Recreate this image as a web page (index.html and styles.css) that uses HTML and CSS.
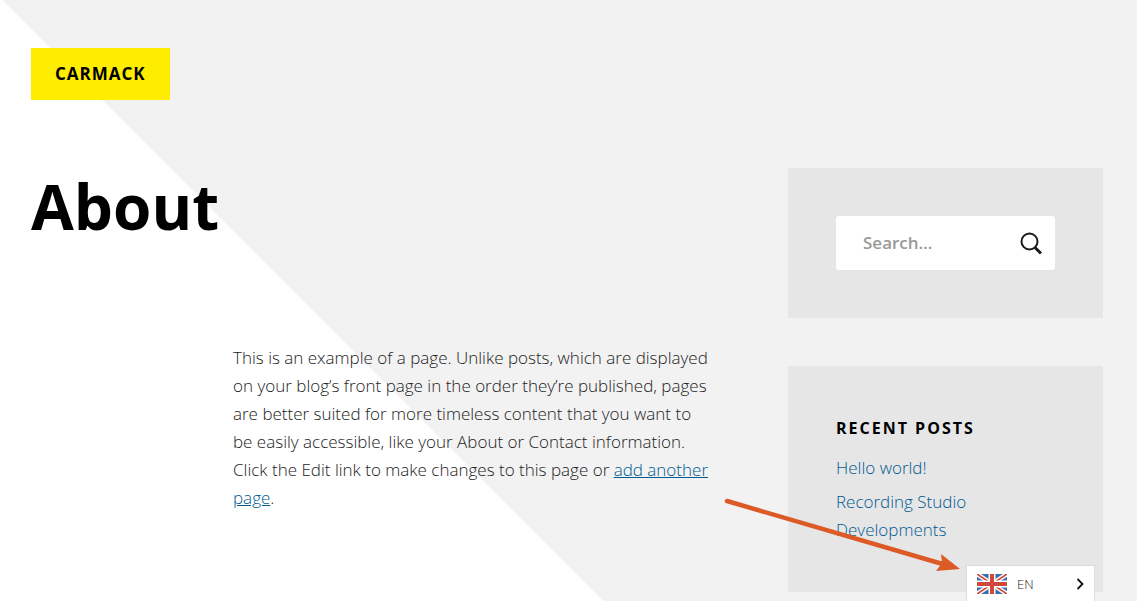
FILE: index.html
```html
<!DOCTYPE html>
<html lang="en">
<head>
<meta charset="utf-8">
<meta name="viewport" content="width=device-width, initial-scale=1">
<title>About – Carmack</title>
<link rel="stylesheet" href="styles.css">
</head>
<body>
<div class="page">
  <header class="site-header">
    <a class="site-title" href="#">CARMACK</a>
  </header>
  <div class="columns">
    <main class="content">
      <h1 class="entry-title">About</h1>
      <p class="entry-text">This is an example of a page. Unlike posts, which are displayed<br>
        on your blog’s front page in the order they’re published, pages<br>
        are better suited for more timeless content that you want to<br>
        be easily accessible, like your About or Contact information.<br>
        Click the Edit link to make changes to this page or <a href="#">add another<br>
        page</a>.</p>
    </main>
    <aside class="sidebar">
      <section class="widget">
        <form class="search" role="search">
          <input class="search-field" type="search" placeholder="Search…" aria-label="Search">
          <button class="search-button" type="button" aria-label="Search">
            <svg width="24" height="24" viewBox="0 0 24 24" fill="none" stroke="#1a1a1a"><circle cx="10.5" cy="10.5" r="8" stroke-width="2"/><path d="M16 16.5L22 22.5" stroke-width="3"/></svg>
          </button>
        </form>
      </section>
      <section class="widget">
        <h2 class="widget-title">RECENT POSTS</h2>
        <ul class="post-list">
          <li><a href="#">Hello world!</a></li>
          <li><a href="#">Recording Studio Developments</a></li>
        </ul>
      </section>
    </aside>
  </div>
</div>
<svg class="pointer" width="236" height="78" viewBox="0 0 236 78" aria-hidden="true">
  <path d="M3 6L222 70" stroke="#dc5a26" stroke-width="4.5" stroke-linecap="round"/>
  <path d="M236 74L217 59L218 68L212 76Z" fill="#dc5a26"/>
</svg>
<button class="language" type="button">
  <svg class="flag" width="30" height="20" viewBox="0 0 30 20" aria-hidden="true">
    <path fill="#3c6eaa" d="M0 0h30v20H0z"/>
    <path d="M0 0L30 20M30 0L0 20" stroke="#fff" stroke-width="4.5"/>
    <path d="M0 0L15 10M30 20L15 10M30 0L15 10M0 20L15 10" stroke="#d0483b" stroke-width="1.6"/>
    <path d="M15 0v20M0 10h30" stroke="#fff" stroke-width="7"/>
    <path d="M15 0v20M0 10h30" stroke="#d0483b" stroke-width="4"/>
  </svg>
  <span class="language-code">EN</span>
  <svg width="8" height="12" viewBox="0 0 8 12" fill="none" stroke="#111" stroke-width="1.8" aria-hidden="true"><path d="M1.5 1L6.5 6L1.5 11"/></svg>
</button>
</body>
</html>
```

FILE: styles.css
```css
* {
  box-sizing: border-box;
}

body {
  margin: 0;
  background: #f2f2f2 linear-gradient(to top right, #fff calc(50% + 1px), #f2f2f2 calc(50% + 2px)) 0 0 / 2000px 2000px no-repeat;
  color: #222;
  font-family: "Open Sans", "Noto Sans", sans-serif;
  font-size: 17px;
  font-weight: 300;
  line-height: 28px;
}

a {
  color: #005a92;
}

.page {
  padding: 48px 34px 8px 31px;
}

.site-header {
  display: flex;
  margin-bottom: 68px;
}

.site-title {
  padding: 12px 24px;
  background: #ffed00;
  color: #000;
  font-weight: 700;
  letter-spacing: 1px;
  text-decoration: none;
}

.columns {
  display: grid;
  grid-template-columns: minmax(0, 1fr) 315px;
  gap: 40px;
}

.entry-title {
  margin: 0 0 100px;
  color: #000;
  font-size: 62px;
  font-weight: 700;
  line-height: 76px;
}

.entry-text {
  margin: 0 0 0 202px;
}

.sidebar {
  display: grid;
  grid-template-columns: minmax(0, 1fr);
  gap: 48px;
}

.widget {
  padding: 48px;
  background: #e6e6e6;
}

.search {
  display: flex;
  align-items: center;
  height: 54px;
  padding: 0 12px 0 27px;
  border-radius: 3px;
  background: #fff;
}

.search-field {
  flex: 1;
  min-width: 0;
  padding: 0;
  border: 0;
  background: none;
  font: inherit;
  font-weight: 600;
}

.search-field::placeholder {
  color: #999;
}

.search-button {
  display: flex;
  padding: 0;
  border: 0;
  background: none;
}

.widget-title {
  margin: 0 0 12px;
  color: #000;
  font-size: 16px;
  font-weight: 700;
  letter-spacing: 2px;
}

.post-list {
  display: grid;
  gap: 6px;
  margin: 0;
  padding: 0;
  list-style: none;
}

.post-list a {
  text-decoration: none;
}

.pointer {
  position: absolute;
  top: 495px;
  left: 724px;
}

.language {
  position: fixed;
  right: 42px;
  bottom: 0;
  display: flex;
  align-items: center;
  gap: 10px;
  width: 129px;
  height: 36px;
  padding: 0 10px;
  border: 1px solid #ddd;
  border-bottom: 0;
  background: #fff;
  color: #222;
  font: 300 13px "Open Sans", "Noto Sans", sans-serif;
}

.language-code {
  flex: 1;
  text-align: left;
}
```
